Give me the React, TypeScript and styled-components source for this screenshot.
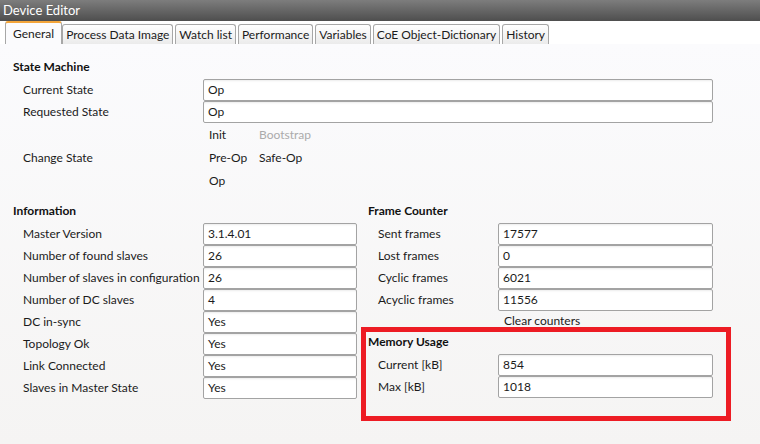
import React from "react";
import styled, { createGlobalStyle } from "styled-components";

const Global = createGlobalStyle`
  html, body { margin: 0; padding: 0; background: #f7f7f7; }
  body { font-family: "Segoe UI", Lato, "Open Sans", sans-serif; font-size: 12px; color: #1b1b1b; }
  * { box-sizing: border-box; }
`;

const Window = styled.div`
  width: 760px;
  height: 444px;
  display: flex;
  flex-direction: column;
  overflow: hidden;
`;

const TitleBar = styled.div`
  height: 21px;
  line-height: 21px;
  padding-left: 3px;
  color: #ffffff;
  font-size: 13px;
  background: linear-gradient(#7d7d7d, #4e4e4e);
`;

const TabStrip = styled.div`
  height: 23px;
  display: flex;
  align-items: flex-end;
  gap: 2px;
  padding-left: 5px;
  background: #ffffff;
`;

const Tab = styled.div<{ $active?: boolean }>`
  height: ${(p) => (p.$active ? 23 : 20)}px;
  padding: 0 ${(p) => (p.$active ? 7 : 3)}px;
  line-height: ${(p) => (p.$active ? 21 : 19)}px;
  font-size: 12px;
  border: 1px solid #a7a7a7;
  border-bottom: none;
  border-top: ${(p) => (p.$active ? "2px solid #f3a53a" : "1px solid #a7a7a7")};
  border-radius: 3px 3px 0 0;
  background: ${(p) => (p.$active ? "#fbfbfd" : "linear-gradient(#ffffff, #ebebeb)")};
  color: #1b1b1b;
  white-space: nowrap;
  margin-right: ${(p) => (p.$active ? "-2px" : "0")};
`;

const Content = styled.div`
  flex: 1;
  padding: 12px 0 0 13px;
  background: linear-gradient(#fbfbfd, #f5f4f3);
`;

const Heading = styled.div`
  font-weight: bold;
  line-height: 22px;
  height: 22px;
  margin-bottom: 1px;
  color: #111;
`;

const Form = styled.div<{ $label: number; $input: number }>`
  display: grid;
  grid-template-columns: ${(p) => p.$label}px ${(p) => p.$input}px;
  padding-left: 10px;
`;

const Label = styled.div<{ $h?: number }>`
  height: ${(p) => p.$h ?? 22}px;
  line-height: ${(p) => p.$h ?? 22}px;
  white-space: nowrap;
`;

const Input = styled.div`
  height: 22px;
  line-height: 20px;
  padding-left: 4px;
  background: #ffffff;
  border: 1px solid #a3a3a3;
  border-radius: 2px;
  box-shadow: inset 0 2px 2px -1px rgba(0, 0, 0, 0.08);
`;

const ButtonGrid = styled.div`
  display: grid;
  grid-template-columns: 50px 50px;
  grid-auto-rows: 23px;
`;

const LinkButton = styled.div<{ $disabled?: boolean; $h?: number }>`
  height: ${(p) => p.$h ?? 23}px;
  line-height: ${(p) => p.$h ?? 23}px;
  padding-left: 6px;
  white-space: nowrap;
  color: ${(p) => (p.$disabled ? "#ababab" : "#1b1b1b")};
`;

const Columns = styled.div`
  display: grid;
  grid-template-columns: 344px 345px;
  column-gap: 11px;
  margin-top: 8px;
`;

const Section = styled.div`
  position: relative;
`;

const Highlight = styled.div`
  position: absolute;
  left: -7px;
  top: -4px;
  right: -18px;
  bottom: -23px;
  border: 5px solid #ed1c24;
  pointer-events: none;
`;

const Spacer = styled.div``;

type Row = [string, string];

const Fields = ({ rows, label, input }: { rows: Row[]; label: number; input: number }) => (
  <Form $label={label} $input={input}>
    {rows.map(([l, v]) => (
      <React.Fragment key={l}>
        <Label>{l}</Label>
        <Input>{v}</Input>
      </React.Fragment>
    ))}
  </Form>
);

export default function App() {
  const tabs = [
    "General",
    "Process Data Image",
    "Watch list",
    "Performance",
    "Variables",
    "CoE Object-Dictionary",
    "History",
  ];
  return (
    <Window>
      <Global />
      <TitleBar>Device Editor</TitleBar>
      <TabStrip>
        {tabs.map((t, i) => (
          <Tab key={t} $active={i === 0}>
            {t}
          </Tab>
        ))}
      </TabStrip>
      <Content>
        <Section>
          <Heading>State Machine</Heading>
          <Fields
            label={180}
            input={510}
            rows={[
              ["Current State", "Op"],
              ["Requested State", "Op"],
            ]}
          />
          <Form $label={180} $input={510}>
            <Spacer />
            <ButtonGrid>
              <LinkButton>Init</LinkButton>
              <LinkButton $disabled>Bootstrap</LinkButton>
            </ButtonGrid>
            <Label $h={23}>Change State</Label>
            <ButtonGrid>
              <LinkButton>Pre-Op</LinkButton>
              <LinkButton>Safe-Op</LinkButton>
            </ButtonGrid>
            <Spacer />
            <ButtonGrid>
              <LinkButton>Op</LinkButton>
            </ButtonGrid>
          </Form>
        </Section>
        <Columns>
          <Section>
            <Heading>Information</Heading>
            <Fields
              label={180}
              input={154}
              rows={[
                ["Master Version", "3.1.4.01"],
                ["Number of found slaves", "26"],
                ["Number of slaves in configuration", "26"],
                ["Number of DC slaves", "4"],
                ["DC in-sync", "Yes"],
                ["Topology Ok", "Yes"],
                ["Link Connected", "Yes"],
                ["Slaves in Master State", "Yes"],
              ]}
            />
          </Section>
          <div>
            <Section>
              <Heading>Frame Counter</Heading>
              <Fields
                label={120}
                input={215}
                rows={[
                  ["Sent frames", "17577"],
                  ["Lost frames", "0"],
                  ["Cyclic frames", "6021"],
                  ["Acyclic frames", "11556"],
                ]}
              />
              <Form $label={120} $input={215}>
                <Spacer />
                <LinkButton $h={20}>Clear counters</LinkButton>
              </Form>
            </Section>
            <Section>
              <Heading>Memory Usage</Heading>
              <Fields
                label={120}
                input={215}
                rows={[
                  ["Current [kB]", "854"],
                  ["Max [kB]", "1018"],
                ]}
              />
              <Highlight />
            </Section>
          </div>
        </Columns>
      </Content>
    </Window>
  );
}
